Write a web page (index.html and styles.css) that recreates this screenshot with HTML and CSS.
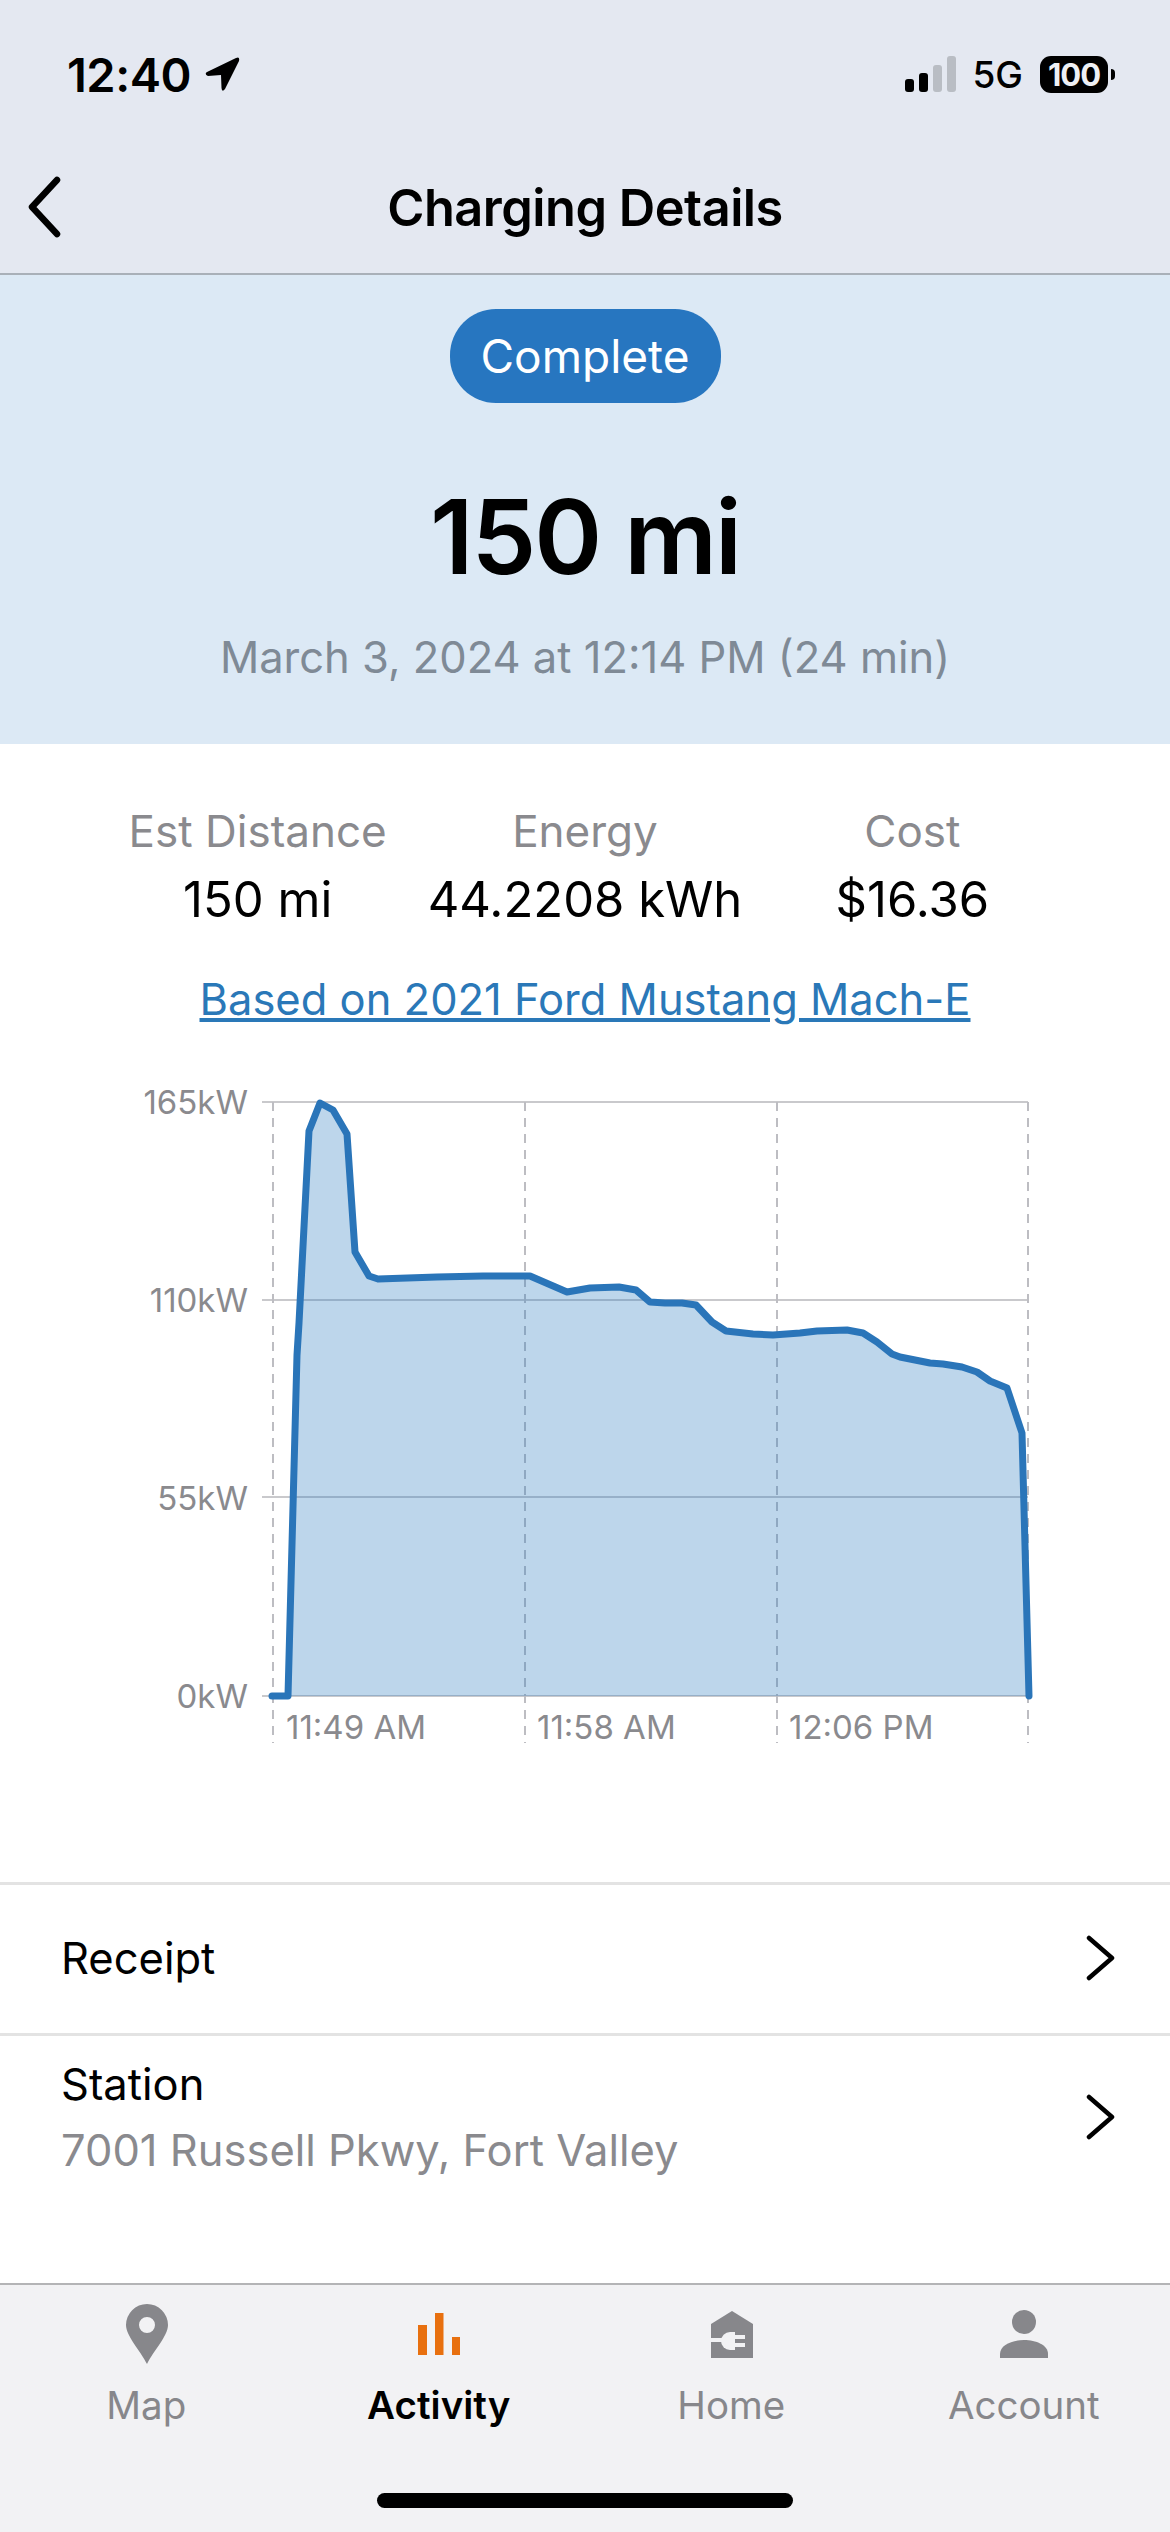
FILE: index.html
```html
<!DOCTYPE html>
<html lang="en">
<head>
    <meta charset="UTF-8">
    <meta name="viewport" content="width=device-width, initial-scale=1.0">
    <title>Charging Details</title>
    <link rel="stylesheet" href="styles.css">
</head>
<body>
    <div class="page">
        <!-- Status bar and title -->
        <header class="topbar">
            <div class="status">
                <div class="status-left">
                    <span class="time">12:40</span>
                    <svg class="loc" viewBox="0 0 36 36"><path d="M2 16L31 2Q35 0 34 5L20 33Q17 37 16.5 32L16 19L3 20Q-1 18 2 16Z"/></svg>
                </div>
                <div class="status-right">
                    <svg class="signal" viewBox="0 0 52 36">
                        <rect x="0" y="23" width="9" height="13" rx="3" fill="#000"/>
                        <rect x="14" y="17" width="9" height="19" rx="3" fill="#000"/>
                        <rect x="28" y="9" width="9" height="27" rx="3" fill="#b9bdc4"/>
                        <rect x="42" y="0" width="9" height="36" rx="3" fill="#b9bdc4"/>
                    </svg>
                    <span class="net">5G</span>
                    <span class="battery">100</span>
                </div>
            </div>
            <nav class="nav">
                <svg class="back" viewBox="0 0 40 64"><path d="M33 6L8 33L33 60"/></svg>
                <h1 class="nav-title">Charging Details</h1>
            </nav>
        </header>

        <!-- Summary -->
        <section class="hero">
            <span class="pill">Complete</span>
            <div class="hero-value">150 mi</div>
            <div class="hero-date">March 3, 2024 at 12:14 PM (24 min)</div>
        </section>

        <section class="stats">
            <div class="stat">
                <div class="stat-label">Est Distance</div>
                <div class="stat-value">150 mi</div>
            </div>
            <div class="stat">
                <div class="stat-label">Energy</div>
                <div class="stat-value">44.2208 kWh</div>
            </div>
            <div class="stat">
                <div class="stat-label">Cost</div>
                <div class="stat-value">$16.36</div>
            </div>
        </section>

        <a class="vehicle-link" href="#">Based on 2021 Ford Mustang Mach-E</a>

        <!-- Power chart -->
        <svg class="chart" viewBox="0 1060 1170 700">
            <g class="grid-h">
                <line x1="262" y1="1102" x2="1028" y2="1102"/>
                <line x1="262" y1="1300" x2="1028" y2="1300"/>
                <line x1="262" y1="1497" x2="1028" y2="1497"/>
                <line x1="262" y1="1696" x2="1028" y2="1696"/>
            </g>
            <g class="grid-v">
                <line x1="273" y1="1102" x2="273" y2="1743"/>
                <line x1="525" y1="1102" x2="525" y2="1743"/>
                <line x1="777" y1="1102" x2="777" y2="1743"/>
                <line x1="1028" y1="1102" x2="1028" y2="1743"/>
            </g>
            <polygon class="area" points="288,1696 297,1355 299,1323 309,1131 320,1103 333,1110 347,1134 355,1252 369,1276 378,1279 437,1277 483,1276 530,1276 567,1292 590,1288 619,1287 636,1290 650,1302 665,1303 682,1303 696,1305 712,1322 726,1331 753,1334 773,1335 800,1333 817,1331 847,1330 863,1333 877,1342 892,1354 900,1357 930,1363 943,1364 962,1367 977,1372 990,1381 1007,1388 1022,1433 1029,1696"/>
            <polyline class="line" points="272,1696 288,1696 297,1355 299,1323 309,1131 320,1103 333,1110 347,1134 355,1252 369,1276 378,1279 437,1277 483,1276 530,1276 567,1292 590,1288 619,1287 636,1290 650,1302 665,1303 682,1303 696,1305 712,1322 726,1331 753,1334 773,1335 800,1333 817,1331 847,1330 863,1333 877,1342 892,1354 900,1357 930,1363 943,1364 962,1367 977,1372 990,1381 1007,1388 1022,1433 1029,1696"/>
            <g class="y-labels">
                <text x="248" y="1114">165kW</text>
                <text x="248" y="1312">110kW</text>
                <text x="248" y="1510">55kW</text>
                <text x="248" y="1708">0kW</text>
            </g>
            <g class="x-labels">
                <text x="286" y="1739">11:49 AM</text>
                <text x="537" y="1739">11:58 AM</text>
                <text x="789" y="1739">12:06 PM</text>
            </g>
        </svg>

        <!-- Links -->
        <div class="rows">
            <div class="row">
                <div class="row-title">Receipt</div>
                <svg class="chevron" viewBox="0 0 30 46"><path d="M3 3L26 23L3 43"/></svg>
            </div>
            <div class="row row-tall">
                <div>
                    <div class="row-title">Station</div>
                    <div class="row-sub">7001 Russell Pkwy, Fort Valley</div>
                </div>
                <svg class="chevron" viewBox="0 0 30 46"><path d="M3 3L26 23L3 43"/></svg>
            </div>
        </div>

        <!-- Tab bar -->
        <footer class="tabbar">
            <div class="tabs">
                <div class="tab">
                    <svg class="tab-icon" viewBox="0 0 100 70"><path fill-rule="evenodd" d="M51 64C44 50 30 36 30 25A21 21 0 0 1 72 25C72 36 58 50 51 64ZM51 17A8 8 0 1 0 51 33A8 8 0 1 0 51 17Z"/></svg>
                    <span>Map</span>
                </div>
                <div class="tab tab-active">
                    <svg class="tab-icon" viewBox="0 0 100 70">
                        <rect x="29" y="25" width="9" height="30"/>
                        <rect x="46" y="13" width="8.5" height="42"/>
                        <rect x="63" y="37" width="8" height="18"/>
                    </svg>
                    <span>Activity</span>
                </div>
                <div class="tab">
                    <svg class="tab-icon" viewBox="0 0 100 70">
                        <path d="M30 58V24L51 11L72 24V58Z"/>
                        <g class="plug">
                            <rect x="29" y="38" width="14" height="4"/>
                            <path d="M54 32H49A9 9 0 0 0 49 50H54Z"/>
                            <rect x="54" y="35" width="10" height="4"/>
                            <rect x="54" y="43" width="10" height="4"/>
                        </g>
                    </svg>
                    <span>Home</span>
                </div>
                <div class="tab">
                    <svg class="tab-icon" viewBox="0 0 100 70">
                        <circle cx="50" cy="22" r="12"/>
                        <path d="M26 58V54C26 45 38 40 50 40C62 40 74 45 74 54V58Z"/>
                    </svg>
                    <span>Account</span>
                </div>
            </div>
            <div class="home-indicator"></div>
        </footer>
    </div>
</body>
</html>
```

FILE: styles.css
```css
* {
    box-sizing: border-box;
}

body {
    margin: 0;
    background-color: #fff;
    color: #000;
    font-family: Inter, "Liberation Sans", sans-serif;
}

.page {
    width: 1170px;
    height: 2532px;
    display: flex;
    flex-direction: column;
    overflow: hidden;
}

/* top bar */
.topbar {
    height: 275px;
    background-color: #e4e8f1;
    border-bottom: 2px solid #a9b0b8;
}

.status {
    height: 148px;
    padding: 0 55px 0 67px;
    display: flex;
    justify-content: space-between;
    align-items: center;
}

.status-left {
    display: flex;
    align-items: center;
    gap: 14px;
}

.time {
    font-size: 47px;
    font-weight: 600;
    letter-spacing: -0.5px;
}

.loc {
    width: 36px;
    height: 36px;
}

.status-right {
    display: flex;
    align-items: center;
}

.signal {
    width: 52px;
    height: 36px;
}

.net {
    font-size: 37px;
    font-weight: 500;
    margin-left: 15px;
}

.battery {
    position: relative;
    width: 68px;
    height: 37px;
    margin-left: 17px;
    margin-right: 7px;
    border-radius: 11px;
    background-color: #000;
    color: #eef0f4;
    font-size: 31px;
    font-weight: 700;
    line-height: 37px;
    text-align: center;
    letter-spacing: -1px;
}

.battery::after {
    content: "";
    position: absolute;
    right: -7px;
    top: 13px;
    width: 4px;
    height: 11px;
    border-radius: 0 6px 6px 0;
    background-color: #000;
}

.nav {
    position: relative;
    height: 125px;
    padding-bottom: 6px;
    display: flex;
    justify-content: center;
    align-items: center;
}

.back {
    position: absolute;
    left: 24px;
    top: 26px;
    width: 40px;
    height: 64px;
    fill: none;
    stroke: #000;
    stroke-width: 6.5;
    stroke-linecap: round;
    stroke-linejoin: round;
}

.nav-title {
    margin: 0;
    font-size: 50.5px;
    font-weight: 600;
    letter-spacing: -0.5px;
}

/* summary */
.hero {
    height: 469px;
    padding-top: 34px;
    background-color: #dce9f5;
    display: flex;
    flex-direction: column;
    align-items: center;
}

.pill {
    width: 271px;
    height: 94px;
    border-radius: 46px;
    background-color: #2776c0;
    color: #fff;
    font-size: 46px;
    line-height: 94px;
    text-align: center;
}

.hero-value {
    margin-top: 74px;
    font-size: 103px;
    font-weight: 600;
    line-height: 120px;
    letter-spacing: -2px;
}

.hero-date {
    margin-top: 34px;
    color: #7f8a96;
    font-size: 43.5px;
    line-height: 52px;
}

/* stats */
.stats {
    margin-top: 59px;
    padding: 0 94px;
    display: grid;
    grid-template-columns: repeat(3, 1fr);
    text-align: center;
}

.stat-label {
    color: #8a8a8e;
    font-size: 44px;
    line-height: 56px;
}

.stat-value {
    margin-top: 13px;
    font-size: 49px;
    line-height: 56px;
    white-space: nowrap;
}

.vehicle-link {
    margin-top: 43px;
    color: #2a78b8;
    font-size: 43.5px;
    line-height: 56px;
    text-align: center;
}

/* chart */
.chart {
    display: block;
    flex: none;
    width: 1170px;
    height: 700px;
    margin-top: 33px;
}

.grid-h line {
    stroke: #c9c9cc;
    stroke-width: 2;
}

.grid-v line {
    stroke: #bdbdc2;
    stroke-width: 2;
    stroke-dasharray: 9 7;
}

.area {
    fill: #2a7abf;
    fill-opacity: 0.31;
}

.line {
    fill: none;
    stroke: #2a75b9;
    stroke-width: 7;
    stroke-linecap: round;
    stroke-linejoin: round;
}

.y-labels text,
.x-labels text {
    fill: #8a8a8e;
    font-size: 33px;
}

.y-labels text {
    text-anchor: end;
}

/* rows */
.rows {
    margin-top: 122px;
}

.row {
    height: 151px;
    padding: 0 54px 3px 61px;
    border-top: 3px solid #e3e3e3;
    display: flex;
    justify-content: space-between;
    align-items: center;
}

.row-tall {
    height: 250px;
    padding-bottom: 86px;
}

.row-title {
    font-size: 43.5px;
    line-height: 56px;
}

.row-sub {
    margin-top: 10px;
    color: #8a8a8e;
    font-size: 43.5px;
    line-height: 56px;
}

.chevron {
    width: 30px;
    height: 46px;
    fill: none;
    stroke: #000;
    stroke-width: 4.5;
    stroke-linecap: round;
    stroke-linejoin: round;
}

/* tab bar */
.tabbar {
    flex: 1;
    background-color: #f2f2f4;
    border-top: 2px solid #b4b4b6;
}

.tabs {
    padding-top: 15px;
    display: grid;
    grid-template-columns: repeat(4, 1fr);
}

.tab {
    display: flex;
    flex-direction: column;
    align-items: center;
    gap: 10px;
    color: #87878b;
    font-size: 38.5px;
    line-height: 50px;
}

.tab-icon {
    display: block;
    width: 100px;
    height: 70px;
    fill: #87878b;
}

.plug {
    fill: #f2f2f4;
}

.tab-active {
    color: #000;
    font-weight: 600;
}

.tab-active .tab-icon {
    fill: #e8700f;
}

.home-indicator {
    width: 416px;
    height: 15px;
    margin: 63px auto 0;
    border-radius: 8px;
    background-color: #000;
}
```
